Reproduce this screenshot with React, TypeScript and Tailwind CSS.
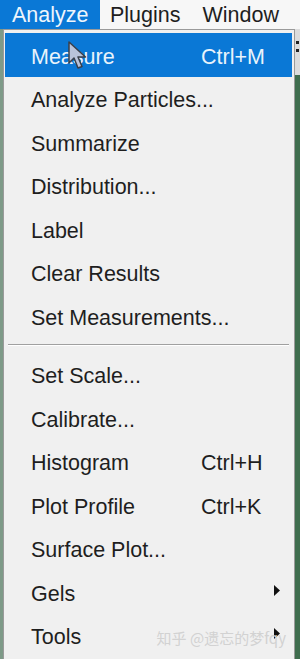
import React from "react";

type Item = { label: string; shortcut?: string; submenu?: boolean; active?: boolean };

const groupA: Item[] = [
  { label: "Measure", shortcut: "Ctrl+M", active: true },
  { label: "Analyze Particles..." },
  { label: "Summarize" },
  { label: "Distribution..." },
  { label: "Label" },
  { label: "Clear Results" },
  { label: "Set Measurements..." },
];

const groupB: Item[] = [
  { label: "Set Scale..." },
  { label: "Calibrate..." },
  { label: "Histogram", shortcut: "Ctrl+H" },
  { label: "Plot Profile", shortcut: "Ctrl+K" },
  { label: "Surface Plot..." },
  { label: "Gels", submenu: true },
  { label: "Tools", submenu: true },
];

const Cursor = () => (
  <svg
    className="absolute left-[63px] top-[8px]"
    width="22"
    height="30"
    viewBox="0 0 22 30"
  >
    <path
      d="M1 1 L1 22 L6 17 L10 27 L14 25.5 L10 16 L17.5 16 Z"
      fill="#b9c3da"
      stroke="#3a3f4a"
      strokeWidth="1.5"
      strokeLinejoin="round"
    />
  </svg>
);

const Row = ({ item }: { item: Item }) => (
  <div
    className={
      "relative flex items-center h-[43.5px] pt-[5px] pl-[26px] pr-[12px] " +
      (item.active ? "bg-[#0a78d6] text-[#e9f3fb]" : "text-[#1e1e1e]")
    }
  >
    <span className="flex-1">{item.label}</span>
    {item.shortcut && <span className="w-[79px]">{item.shortcut}</span>}
    {item.submenu && (
      <svg width="6" height="11" viewBox="0 0 6 11" className="mb-[8px]">
        <path d="M0 0 L6 5.5 L0 11 Z" fill="#111" />
      </svg>
    )}
    {item.active && <Cursor />}
  </div>
);

export default function App() {
  return (
    <div
      className="w-[300px] h-[659px] overflow-hidden bg-[#f3f3f3] flex flex-col text-[21.5px] leading-none"
      style={{ fontFamily: '"Liberation Sans", Arial, sans-serif' }}
    >
      <div className="flex h-[29px] items-center bg-[#f7f7f7] shrink-0">
        <div className="h-full w-[100px] bg-[#0a78d6] text-[#eef5fc] flex items-center pl-[12px] pt-[3px]">
          Analyze
        </div>
        <div className="pl-[10px] pt-[3px] text-[#1e1e1e]">Plugins</div>
        <div className="pl-[22px] pt-[3px] text-[#1e1e1e]">Window</div>
      </div>

      <div className="flex flex-1 min-h-0">
        <div className="w-[3px] bg-[#7e9a88]" />
        <div className="relative flex-1 bg-[#f0f0f0] border-l border-t border-r border-[#9a9a9a] pt-[3px] pl-px pr-[2px]">
          {groupA.map((it) => (
            <Row key={it.label} item={it} />
          ))}
          <div className="h-[15px] flex items-center px-[3px]">
            <div className="w-full h-[2px] border-t border-[#a0a0a0] border-b border-b-white" />
          </div>
          {groupB.map((it) => (
            <Row key={it.label} item={it} />
          ))}
          <div
            className="absolute right-[8px] bottom-[14px] text-[15px] text-[#d2d2d2] leading-none"
            style={{ fontFamily: '"Noto Sans CJK SC", "Liberation Sans", sans-serif' }}
          >
            知乎 @遗忘的梦fqy
          </div>
        </div>
        <div className="w-[5px] flex flex-col">
          <div className="h-[46px] bg-[#dcdcdc] flex flex-col items-center pt-[12px] gap-[5px]">
            <div className="w-[3px] h-[3px] bg-[#222]" />
            <div className="w-[3px] h-[3px] bg-[#222]" />
          </div>
          <div className="flex-1 bg-[#3f6d4e]" />
        </div>
      </div>
    </div>
  );
}
